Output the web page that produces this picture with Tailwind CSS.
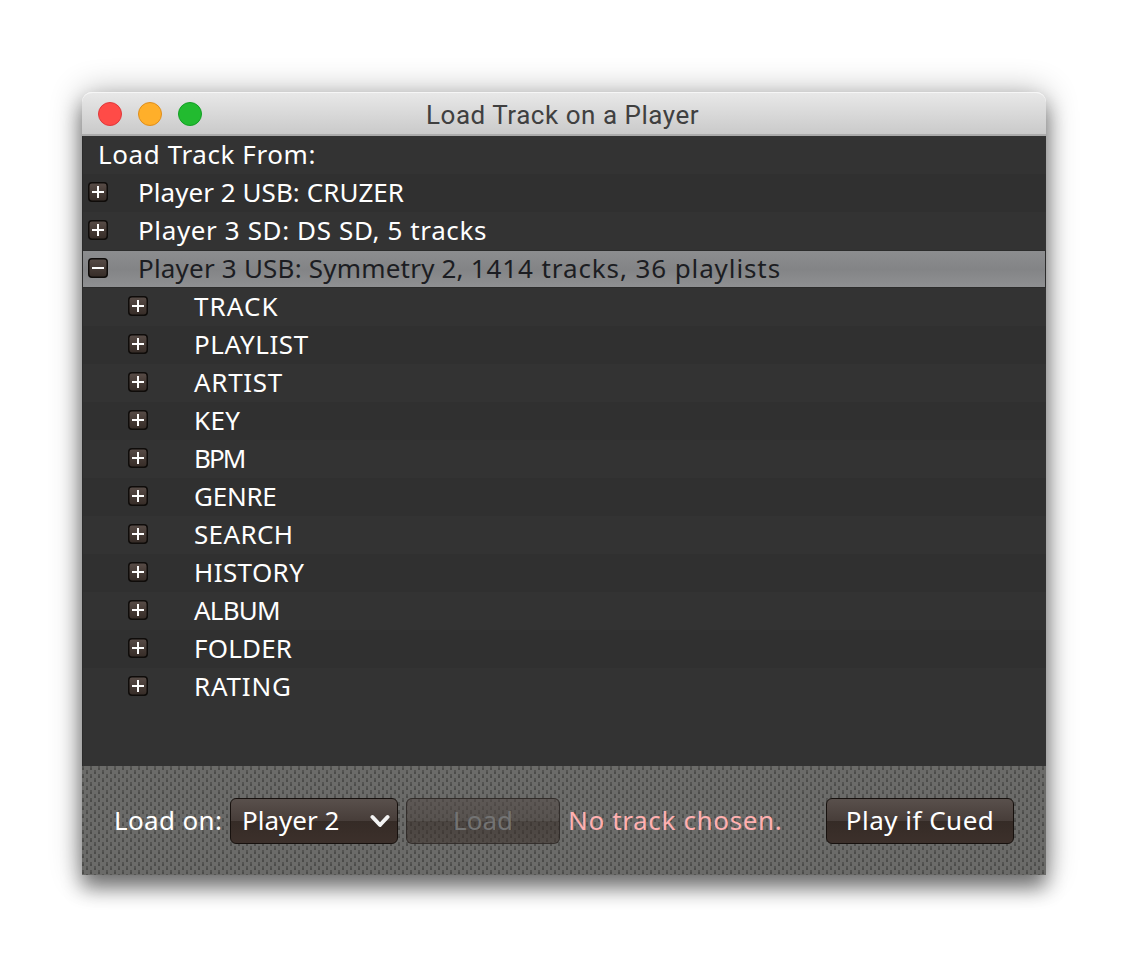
<!DOCTYPE html>
<html lang="en">
<head>
<meta charset="utf-8">
<title>Load Track on a Player</title>
<script src="https://cdn.jsdelivr.net/npm/@tailwindcss/browser@4"></script>
</head>
<body class="bg-white w-[1130px] h-[968px] overflow-hidden pt-[92px] pl-[82px] font-['Noto_Sans',sans-serif] text-[26px] leading-9 text-white">
<svg class="absolute size-0" aria-hidden="true">
  <defs>
    <linearGradient id="box" x1="0" y1="0" x2="0" y2="1"><stop offset="0" stop-color="#584c47"/><stop offset="1" stop-color="#352b26"/></linearGradient>
    <symbol id="plus" viewBox="0 0 20 20"><rect x=".75" y=".75" width="18.5" height="18.5" rx="3.2" fill="url(#box)" stroke="#0f0c0a" stroke-width="1.5"/><path d="M4 10H16M10 4V16" stroke="#fff" stroke-width="2"/></symbol>
    <symbol id="minus" viewBox="0 0 20 20"><rect x=".75" y=".75" width="18.5" height="18.5" rx="3.2" fill="url(#box)" stroke="#0f0c0a" stroke-width="1.5"/><path d="M4 10H16" stroke="#fff" stroke-width="2"/></symbol>
  </defs>
</svg>
<main class="w-[964px] h-[783px] rounded-t-[10px] shadow-[0_13px_20px_rgba(0,0,0,0.48),0_0_32px_rgba(0,0,0,0.3)] flex flex-col">
  <header class="relative h-11 shrink-0 rounded-t-[10px] bg-linear-to-b from-[#e8e8e8] to-[#cacaca] border-t border-t-[#f6f6f6] border-b-2 border-b-[#ababab] flex items-center px-4">
    <div class="flex gap-4 w-[105px]">
      <span class="size-6 rounded-full bg-[#ff4b47] border border-[#e0383b]"></span>
      <span class="size-6 rounded-full bg-[#ffaf2a] border border-[#df8e1c]"></span>
      <span class="size-6 rounded-full bg-[#22bb30] border border-[#129f24]"></span>
    </div>
    <h1 class="ml-[223px] pt-0.5 font-[Roboto,sans-serif] text-[#404040] text-[26px] tracking-[0.53px] whitespace-nowrap">Load Track on a Player</h1>
  </header>
  <section class="h-[630px] shrink-0 bg-[#333333] border-l border-[#2b2b2b] whitespace-nowrap">
    <div class="h-[38px] pl-[15px]"><span class="tracking-[0.6px]">Load Track From:</span></div>
    <div class="h-[38px] pb-0.5 pl-[5px] flex items-center bg-[#303030]"><svg class="size-5 mr-[30px]"><use href="#plus"/></svg><span class="tracking-[0.05px]">Player 2 USB: CRUZER</span></div>
    <div class="h-[38px] pb-0.5 pl-[5px] flex items-center"><svg class="size-5 mr-[30px]"><use href="#plus"/></svg><span class="tracking-[0.62px]">Player 3 SD: DS SD, 5 tracks</span></div>
    <div class="h-[38px] py-px pr-px bg-[#2c2c2c]"><div class="h-9 pb-0.5 pl-[5px] flex items-center bg-linear-to-b from-[#8c8d8f] via-[#838486] to-[#8f9092] text-[#1c1d22]"><svg class="size-5 mr-[30px]"><use href="#minus"/></svg><span class="whitespace-pre tracking-[0.2px]">Player 3 USB: Symmetry 2, </span><span class="tracking-[0.9px]">1414 tracks, 36 playlists</span></div></div>
    <div class="h-[38px] pb-0.5 pl-[45px] flex items-center"><svg class="size-5 mr-[46px]"><use href="#plus"/></svg><span class="tracking-[1.1px]">TRACK</span></div>
    <div class="h-[38px] pb-0.5 pl-[45px] flex items-center bg-[#303030]"><svg class="size-5 mr-[46px]"><use href="#plus"/></svg><span class="tracking-[0.55px]">PLAYLIST</span></div>
    <div class="h-[38px] pb-0.5 pl-[45px] flex items-center"><svg class="size-5 mr-[46px]"><use href="#plus"/></svg><span class="tracking-[0.7px]">ARTIST</span></div>
    <div class="h-[38px] pb-0.5 pl-[45px] flex items-center bg-[#303030]"><svg class="size-5 mr-[46px]"><use href="#plus"/></svg><span class="tracking-[0.3px]">KEY</span></div>
    <div class="h-[38px] pb-0.5 pl-[45px] flex items-center"><svg class="size-5 mr-[46px]"><use href="#plus"/></svg><span class="tracking-[-2px]">BPM</span></div>
    <div class="h-[38px] pb-0.5 pl-[45px] flex items-center bg-[#303030]"><svg class="size-5 mr-[46px]"><use href="#plus"/></svg><span class="tracking-[-0.25px]">GENRE</span></div>
    <div class="h-[38px] pb-0.5 pl-[45px] flex items-center"><svg class="size-5 mr-[46px]"><use href="#plus"/></svg><span class="tracking-[0.35px]">SEARCH</span></div>
    <div class="h-[38px] pb-0.5 pl-[45px] flex items-center bg-[#303030]"><svg class="size-5 mr-[46px]"><use href="#plus"/></svg><span class="tracking-[0.4px]">HISTORY</span></div>
    <div class="h-[38px] pb-0.5 pl-[45px] flex items-center"><svg class="size-5 mr-[46px]"><use href="#plus"/></svg><span class="tracking-[-0.8px]">ALBUM</span></div>
    <div class="h-[38px] pb-0.5 pl-[45px] flex items-center bg-[#303030]"><svg class="size-5 mr-[46px]"><use href="#plus"/></svg><span class="tracking-[0.2px]">FOLDER</span></div>
    <div class="h-[38px] pb-0.5 pl-[45px] flex items-center"><svg class="size-5 mr-[46px]"><use href="#plus"/></svg><span class="tracking-[0.8px]">RATING</span></div>
  </section>
  <footer class="relative h-[109px] shrink-0 bg-[#6b6b69] whitespace-nowrap">
    <svg class="absolute inset-0 w-full h-full"><defs><pattern id="weave" width="8" height="8" patternUnits="userSpaceOnUse"><path d="M0 0h2v4h-2zM4 4h2v4h-2z" fill="#545452"/><path d="M0 2h2v2h-2zM4 6h2v2h-2z" fill="#4c4c4a"/></pattern></defs><rect width="100%" height="100%" fill="url(#weave)"/></svg>
    <div class="relative flex items-center h-[110px] pl-8 pr-8">
      <span class="w-[116px] pb-0.5 tracking-[0.35px]">Load on:</span>
      <button class="w-[168px] h-[46px] rounded-md border-[1.5px] border-[#17110e] bg-[linear-gradient(#59504c,#473d39_50%,#352b26_50%,#3c302b)] pl-[11px] pr-[7px] flex items-center justify-between"><span class="pb-0.5">Player 2</span><svg class="w-5 h-5" viewBox="0 0 20 20" fill="none" stroke="#f4f4f4" stroke-width="4" stroke-linecap="round" stroke-linejoin="round"><path d="M2.5 6L10 14L17.5 6"/></svg></button>
      <button disabled class="ml-2 w-[154px] h-[46px] rounded-md border border-[#2c2724]/80 bg-[linear-gradient(#544b4899,#4a423e99_50%,#352b2699_50%,#40363199)] pb-0.5 text-[#737373]">Load</button>
      <span class="ml-2 pb-0.5 tracking-[0.65px] text-[#ffb0b0]">No track chosen.</span>
      <button class="ml-auto w-[188px] h-[46px] rounded-md border-[1.5px] border-[#17110e] bg-[linear-gradient(#59504c,#473d39_50%,#352b26_50%,#3c302b)] pb-0.5 tracking-[0.5px]">Play if Cued</button>
    </div>
  </footer>
</main>
</body>
</html>
